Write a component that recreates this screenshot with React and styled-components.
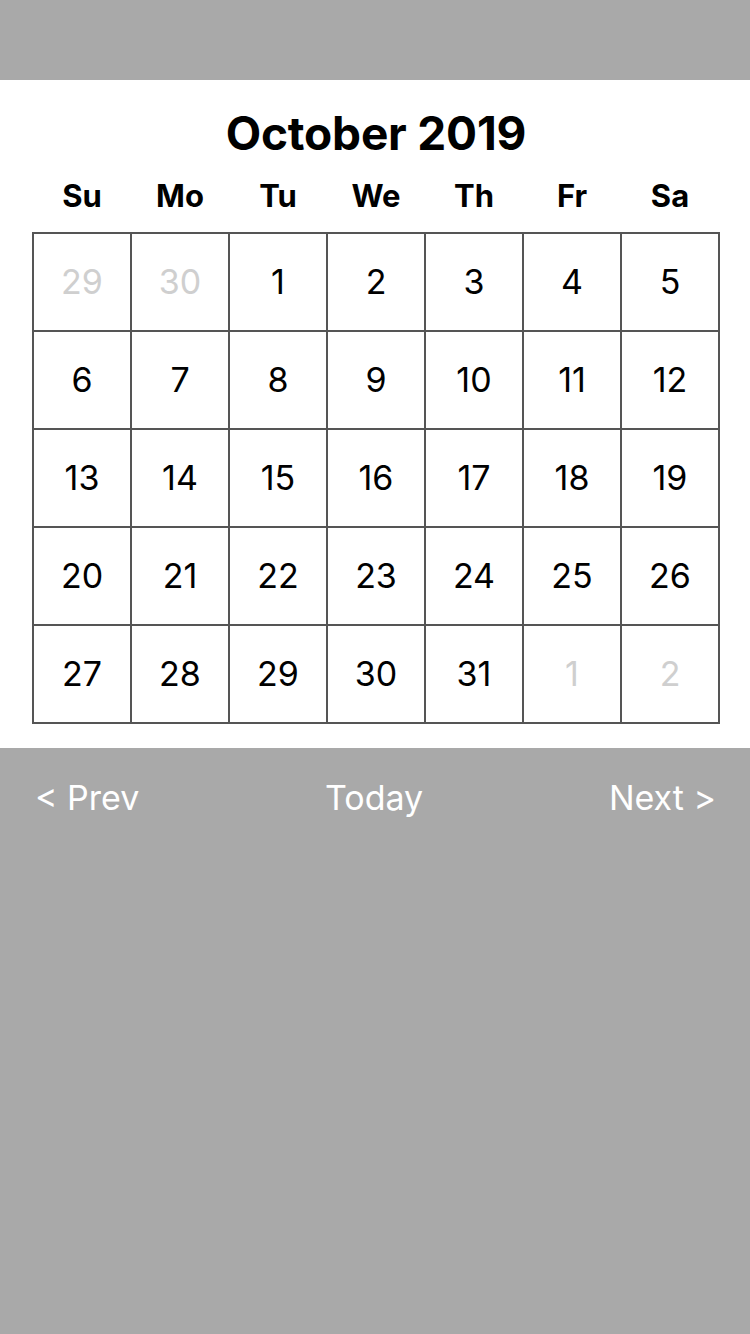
import styled, { createGlobalStyle } from "styled-components";

const GlobalStyle = createGlobalStyle`
  html, body {
    margin: 0;
    padding: 0;
    background: #a9a9a9;
    font-family: Inter, "Noto Sans", sans-serif;
  }
`;

const weekDays = ["Su", "Mo", "Tu", "We", "Th", "Fr", "Sa"];

function buildDays() {
  const days = [
    { day: 29, muted: true },
    { day: 30, muted: true },
  ];
  for (let d = 1; d <= 31; d++) days.push({ day: d, muted: false });
  days.push({ day: 1, muted: true }, { day: 2, muted: true });
  return days;
}

export default function App() {
  const days = buildDays();

  return (
    <>
      <GlobalStyle />
      <Page>
        <TopBar />
        <Panel>
          <Title>October 2019</Title>
          <WeekRow>
            {weekDays.map((name) => (
              <WeekDay key={name}>{name}</WeekDay>
            ))}
          </WeekRow>
          <Grid>
            {days.map(({ day, muted }, i) => (
              <Cell key={i} $muted={muted}>
                {day}
              </Cell>
            ))}
          </Grid>
        </Panel>
        <Nav>
          <NavButton>&lt; Prev</NavButton>
          <NavButton>Today</NavButton>
          <NavButton>Next &gt;</NavButton>
        </Nav>
      </Page>
    </>
  );
}

const Page = styled.div`
  min-height: 1334px;
  background: #a9a9a9;
`;

const TopBar = styled.div`
  height: 80px;
`;

const Panel = styled.div`
  background: #fff;
  padding: 26px 30px 24px 32px;
  display: flex;
  flex-direction: column;
  align-items: stretch;
`;

const Title = styled.h1`
  margin: 0;
  text-align: center;
  font-size: 46px;
  font-weight: 700;
  line-height: 54px;
  color: #000;
  letter-spacing: -0.2px;
`;

const WeekRow = styled.div`
  display: grid;
  grid-template-columns: repeat(7, 98px);
  margin: 12px 0 13px;
  height: 47px;
  align-items: center;
`;

const WeekDay = styled.div`
  text-align: center;
  font-size: 31px;
  font-weight: 700;
  color: #000;
  padding-left: 2px;
`;

const Grid = styled.div`
  display: grid;
  grid-template-columns: repeat(7, 98px);
  grid-auto-rows: 98px;
  border-top: 2px solid #555;
  border-left: 2px solid #555;
  width: 686px;
`;

const Cell = styled.div`
  border-right: 2px solid #555;
  border-bottom: 2px solid #555;
  display: flex;
  align-items: center;
  justify-content: center;
  padding-bottom: 2px;
  font-size: 34px;
  color: ${(p) => (p.$muted ? "#cfcfcf" : "#000")};
`;

const Nav = styled.div`
  display: flex;
  justify-content: space-between;
  align-items: center;
  padding: 28px 34px 0 35px;
`;

const NavButton = styled.div`
  color: #fff;
  font-size: 34px;
  line-height: 44px;
`;
